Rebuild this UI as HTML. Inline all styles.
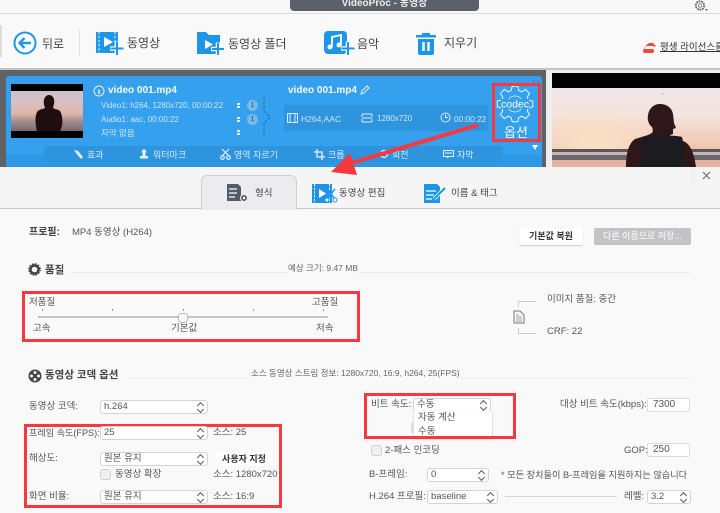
<!DOCTYPE html>
<html><head><meta charset="utf-8">
<style>
*{box-sizing:border-box}
html,body{margin:0;padding:0}
body{width:720px;height:513px;overflow:hidden;position:relative;background:#f9f9fa;font-family:"Liberation Sans","Noto Sans CJK KR",sans-serif;color:#555}
#w{position:absolute;left:0;top:0;width:720px;height:513px;overflow:hidden;filter:blur(.3px)}
.a{position:absolute;white-space:nowrap}
.t{position:absolute;white-space:nowrap;line-height:14px}
.sel{position:absolute;height:13px;background:#fff;border:1px solid #d4d4d6;border-radius:3px;font-size:9.5px;line-height:11px;padding-left:3px;color:#555;white-space:nowrap}
.sel:before,.sel:after{content:"";position:absolute;right:4px;width:4px;height:4px;transform:rotate(45deg)}
.sel:before{top:1.5px;border-top:1px solid #555;border-left:1px solid #555}
.sel:after{top:6px;border-bottom:1px solid #555;border-right:1px solid #555}
.inp{position:absolute;height:14px;background:#fff;border:1px solid #dcdcde;border-radius:2px;font-size:10px;line-height:12px;padding-left:5px;color:#555}
.red{position:absolute;border:3px solid #f7393f}
.ck{position:absolute;width:11px;height:11px;background:#f0f0f0;border:1px solid #d0d0d2;border-radius:3px}
</style></head><body><div id="w">

<!-- top bar -->
<div class="a" style="left:0;top:0;width:720px;height:14px;background:#f8f8f8;border-bottom:1px solid #dcdcdc"></div>
<div class="a" style="left:290px;top:0;width:189px;height:11px;background:#5c6169;border-radius:0 0 4px 4px;color:#eee;font-size:10px;font-weight:bold;line-height:8px;text-align:center">VideoProc - 동영상</div>
<svg class="a" style="left:694px;top:0" width="15" height="13" viewBox="0 0 15 13"><circle cx="6" cy="5.500" r="4.200" fill="none" stroke="#666" stroke-width="1.800" stroke-dasharray="1.800 .8"/><circle cx="6" cy="5.500" r="1.800" fill="none" stroke="#777" stroke-width=".8"/><path d="M11 9h3l-1.500 2z" fill="#666"/></svg>

<!-- toolbar -->
<div class="a" style="left:0;top:14px;width:720px;height:54px;background:#f9f9f9"></div>
<div class="a" style="left:0;top:25px;width:2px;height:32px;background:#ddd"></div>
<svg class="a" style="left:12px;top:30px" width="26" height="26" viewBox="0 0 26 26"><circle cx="13" cy="13" r="10.500" fill="#fff" stroke="#1e96e8" stroke-width="2"/><path d="M19 13H8M12.500 8l-5 5 5 5" fill="none" stroke="#1e96e8" stroke-width="2.400"/></svg>
<div class="t" style="left:42px;top:37px;font-size:12px;color:#444">뒤로</div>
<div class="a" style="left:79px;top:29px;width:1px;height:27px;background:#e2e2e2"></div>

<svg class="a" style="left:96px;top:31px" width="29" height="25" viewBox="0 0 29 25"><rect x="0" y="1" width="22" height="21" fill="#1e96e8"/><path d="M3 1v21M19 1v21" stroke="#fff" stroke-width=".9" stroke-dasharray="2.400 1.600"/><path d="M8 6l9 5-9 5z" fill="#fff"/><path d="M21 10.500v14M14 17.500h14" stroke="#f9f9f9" stroke-width="4.500"/><path d="M21 11v13M14.500 17.500h13" stroke="#1e96e8" stroke-width="2"/></svg>
<div class="t" style="left:127px;top:36px;font-size:12px;color:#444">동영상</div>

<svg class="a" style="left:197px;top:31px" width="29" height="25" viewBox="0 0 29 25"><path d="M0 2a1 1 0 0 1 1-1h8l3 3h11v19H0z" fill="#1e96e8"/><path d="M8 9l8 4.500-8 4.500z" fill="#fff"/><path d="M21 11.500v13M14 18h14" stroke="#f9f9f9" stroke-width="4.500"/><path d="M21 12v12M15 18h12" stroke="#1e96e8" stroke-width="2"/></svg>
<div class="t" style="left:228px;top:37px;font-size:12px;color:#444">동영상 폴더</div>

<svg class="a" style="left:324px;top:31px" width="32" height="25" viewBox="0 0 32 25"><rect x="0" y="0" width="23" height="23" rx="4" fill="#1e96e8"/><path d="M8 16V6l9-2v10" fill="none" stroke="#fff" stroke-width="1.800"/><circle cx="6" cy="16" r="2.500" fill="#fff"/><circle cx="15" cy="14" r="2.500" fill="#fff"/><path d="M24 10.500v14M17 17.500h14" stroke="#f9f9f9" stroke-width="4.500"/><path d="M24 11v13M17.500 17.500h13" stroke="#1e96e8" stroke-width="2"/></svg>
<div class="t" style="left:357px;top:37px;font-size:12px;color:#444">음악</div>

<svg class="a" style="left:415px;top:32px" width="22" height="24" viewBox="0 0 22 24"><path d="M1 3h20v2.500H1z" fill="#1e96e8"/><path d="M7 3V1h8v2" fill="#1e96e8"/><path d="M3 7h16v14a2 2 0 0 1-2 2H5a2 2 0 0 1-2-2z" fill="#1e96e8"/><path d="M8.500 10v9M13.500 10v9" stroke="#fff" stroke-width="2.400"/></svg>
<div class="t" style="left:444px;top:36px;font-size:12px;color:#444">지우기</div>

<svg class="a" style="left:643px;top:42px" width="14" height="12" viewBox="0 0 14 12"><path d="M1 8C2 3 6 0 10 1l3 3-2 1c0-1-1-1-2-1H3z" fill="#ef4a3b"/><rect x="0" y="7" width="11" height="4" rx="2" fill="#ef4a3b"/></svg>
<div class="t" style="left:660px;top:41px;font-size:9.500px;color:#333;text-decoration:underline;width:60px;overflow:hidden">평생 라이선스를</div>

<!-- band -->
<div class="a" style="left:0;top:68px;width:720px;height:99px;background:#eeeeee;border-top:2px solid #c4c4c4"></div>
<div class="a" style="left:0;top:70px;width:546px;height:97px;background:#5f6367"></div>

<!-- right preview -->
<svg class="a" style="left:552px;top:73px" width="168" height="94" viewBox="0 0 168 94">
<defs><linearGradient id="sky" x1="0" y1="0" x2="0" y2="1"><stop offset="0" stop-color="#efe9ee"/><stop offset=".45" stop-color="#f3e3de"/><stop offset=".75" stop-color="#f3c9b3"/><stop offset="1" stop-color="#d99f86"/></linearGradient>
<radialGradient id="sun" cx=".25" cy=".8" r=".5"><stop offset="0" stop-color="#fbe3c6"/><stop offset="1" stop-color="#fbe3c6" stop-opacity="0"/></radialGradient></defs>
<rect width="168" height="94" fill="url(#sky)"/><rect width="168" height="94" fill="url(#sun)"/><rect width="168" height="15" fill="#000"/>
<rect y="76" width="168" height="3" fill="#5a5660"/><rect y="79" width="168" height="3" fill="#cbb4ae"/><rect y="82" width="168" height="5" fill="#6b666d"/><rect y="87" width="168" height="7" fill="#e3b5a0"/>
<path d="M74 94c0-14 3-24 9-28l13-4 4-2c1-1 1-4 0-6-3-2-5-7-4-12 1-7 6-11 12-11 7 0 12 4 13 10l1 9 2 5-3 1v5l-3 1 1 3 12 3c6 2 11 10 13 26z" fill="#2d171a"/>
<path d="M88 94c0-12 1-24 4-30 10-2 32-2 38 0 2 8 3 20 2 30z" fill="#1c1b20"/>
<path d="M108 20l5 1-1 1z" fill="#bbb"/>
</svg>

<!-- blue panel -->
<div class="a" style="left:6px;top:76px;width:536px;height:91px;background:#34a0ee;border-radius:3px 3px 0 0"></div>
<div class="a" style="left:6px;top:155px;width:536px;height:12px;background:#2c98e6"></div>
<div class="a" style="left:44px;top:146px;width:459px;height:17px;background:#2e94de;border-radius:3px"></div>
<svg class="a" style="left:11px;top:84px" width="72" height="54" viewBox="0 0 72 54">
<defs><linearGradient id="sky2" x1="0" y1="0" x2="0" y2="1"><stop offset="0" stop-color="#cdbfcb"/><stop offset=".3" stop-color="#d6c2c6"/><stop offset=".55" stop-color="#e0b4a4"/><stop offset=".7" stop-color="#9b8a8d"/><stop offset="1" stop-color="#5f565d"/></linearGradient></defs>
<rect width="72" height="54" fill="url(#sky2)"/><rect width="72" height="7" fill="#000"/><rect y="47" width="72" height="7" fill="#000"/>
<path d="M26 47c-2-7-2-15 0-19 2-3 7-3 8-4 0-1-1-2-1-4-1-4 1-9 5-9 4 0 6 4 5 9l-1 4c3 2 7 1 8 5 2 6 2 13-1 18z" fill="#1f0f10"/></svg>

<svg class="a" style="left:92px;top:84px" width="14" height="14" viewBox="0 0 14 14"><circle cx="7" cy="7" r="5" fill="#3a9fe8" stroke="#e6f2fb" stroke-width="1"/><path d="M7 5.500v4.500" stroke="#e6f2fb" stroke-width="1.500"/><path d="M8 3.500l1 1" stroke="#e44" stroke-width="1"/></svg>
<div class="t" style="left:108px;top:84px;font-size:10px;font-weight:bold;color:#f4faff">video 001.mp4</div>
<div class="t" style="left:101px;top:99px;font-size:8px;color:#cfe6f8">Video1: h264, 1280x720, 00:00:22</div>
<div class="t" style="left:101px;top:113px;font-size:8px;color:#cfe6f8">Audio1: aac, 00:00:22</div>
<div class="t" style="left:101px;top:126px;font-size:8.500px;color:#cfe6f8">자막 없음</div>
<div class="a" style="left:237px;top:103px;width:3px;height:2px;background:#e6f2fb;box-shadow:0 3px 0 #e6f2fb"></div>
<div class="a" style="left:237px;top:117px;width:3px;height:2px;background:#e6f2fb;box-shadow:0 3px 0 #e6f2fb"></div>
<div class="a" style="left:237px;top:130px;width:3px;height:2px;background:#e6f2fb;box-shadow:0 3px 0 #e6f2fb"></div>
<div class="a" style="left:247px;top:100px;width:11px;height:11px;border-radius:50%;background:#79b9e8;color:#1c5a88;font-size:7px;line-height:11px;text-align:center">1</div>
<div class="a" style="left:247px;top:114px;width:11px;height:11px;border-radius:50%;background:#79b9e8;color:#1c5a88;font-size:7px;line-height:11px;text-align:center">1</div>
<svg class="a" style="left:258px;top:96px" width="18" height="40" viewBox="0 0 18 40"><path d="M6 1v14l6 6-6 6v12" fill="none" stroke="#1f6ea8" stroke-width="1" stroke-dasharray="3 1.500"/></svg>

<div class="t" style="left:288px;top:84px;font-size:10px;font-weight:bold;color:#f4faff">video 001.mp4</div>
<svg class="a" style="left:360px;top:85px" width="10" height="10" viewBox="0 0 10 10"><path d="M1 9l1-3 5-5 2 2-5 5z" fill="none" stroke="#e6f2fb" stroke-width="1"/></svg>
<div class="a" style="left:284px;top:105px;width:204px;height:26px;background:#2e94de;border-radius:2px"></div>
<svg class="a" style="left:287px;top:113px" width="11" height="10" viewBox="0 0 11 10"><rect x=".5" y=".5" width="10" height="9" fill="none" stroke="#d8ebfa"/><path d="M3 .5v9M8 .5v9" stroke="#d8ebfa"/></svg>
<div class="t" style="left:301px;top:112px;font-size:8.500px;color:#cfe6f8">H264,AAC</div>
<svg class="a" style="left:361px;top:113px" width="12" height="10" viewBox="0 0 12 10"><path d="M1 1h10M1 9h10M1 1v3M11 1v3M1 6v3M11 6v3M1 5h10" fill="none" stroke="#d8ebfa"/></svg>
<div class="t" style="left:377px;top:112px;font-size:8px;color:#cfe6f8">1280x720</div>
<svg class="a" style="left:440px;top:112px" width="11" height="11" viewBox="0 0 11 11"><circle cx="5.500" cy="5.500" r="4.500" fill="none" stroke="#d8ebfa"/><path d="M5.500 2.500v3h2.500" fill="none" stroke="#d8ebfa"/></svg>
<div class="t" style="left:454px;top:112px;font-size:8.300px;color:#cfe6f8">00:00:22</div>

<!-- codec -->
<svg class="a" style="left:494px;top:83px" width="42" height="42" viewBox="0 0 42 42"><g transform="translate(21,21)"><polygon points="13.46,-3.86 17.78,-2.82 17.78,2.82 13.46,3.86 12.24,6.79 14.56,10.58 10.58,14.56 6.79,12.24 3.86,13.46 2.82,17.78 -2.82,17.78 -3.86,13.46 -6.79,12.24 -10.58,14.56 -14.56,10.58 -12.24,6.79 -13.46,3.86 -17.78,2.82 -17.78,-2.82 -13.46,-3.86 -12.24,-6.79 -14.56,-10.58 -10.58,-14.56 -6.79,-12.24 -3.86,-13.46 -2.82,-17.78 2.82,-17.78 3.86,-13.46 6.79,-12.24 10.58,-14.56 14.56,-10.58 12.24,-6.79" fill="none" stroke="#eaf5fd" stroke-width="1"/><circle r="8" fill="none" stroke="#eaf5fd" stroke-width=".7"/><rect x="-14" y="-5" width="28" height="10" fill="#34a0ee"/><text x="0" y="3.500" font-size="10.500" fill="#fff" text-anchor="middle" font-family="Liberation Sans">codec</text></g></svg>
<div class="t" style="left:504px;top:126px;font-size:13px;color:#f2f9fe">옵션</div>
<div class="red" style="left:492px;top:83px;width:49px;height:59px"></div>
<div class="a" style="left:532px;top:145px;width:0;height:0;border-left:3.500px solid transparent;border-right:3.500px solid transparent;border-top:5px solid #fff"></div>
<div class="t" style="left:531px;top:74px;font-size:6px;color:#1a5f94">⌄⌄</div>

<!-- strip labels -->
<svg class="a" style="left:73px;top:149px" width="11" height="11" viewBox="0 0 11 11"><path d="M1 1l4 1 5 6-2 2-5-6z" fill="#e6f2fb"/></svg>
<div class="t" style="left:87px;top:148px;font-size:9px;color:#d8ebfa">효과</div>
<svg class="a" style="left:139px;top:149px" width="10" height="10" viewBox="0 0 10 10"><circle cx="5" cy="2.500" r="2.200" fill="#e6f2fb"/><rect x="3.500" y="4" width="3" height="3" fill="#e6f2fb"/><rect x="1" y="7" width="8" height="2.500" fill="#e6f2fb"/></svg>
<div class="t" style="left:153px;top:148px;font-size:9px;color:#d8ebfa">워터마크</div>
<svg class="a" style="left:220px;top:148px" width="11" height="12" viewBox="0 0 11 12"><path d="M2 1l7 7M9 1L2 8" stroke="#e6f2fb" stroke-width="1.200"/><circle cx="2.500" cy="9.500" r="1.800" fill="none" stroke="#e6f2fb" stroke-width="1.200"/><circle cx="8.500" cy="9.500" r="1.800" fill="none" stroke="#e6f2fb" stroke-width="1.200"/></svg>
<div class="t" style="left:234px;top:148px;font-size:9px;color:#d8ebfa">영역 자르기</div>
<svg class="a" style="left:314px;top:149px" width="11" height="11" viewBox="0 0 11 11"><path d="M3 0v8h8M0 3h8v8" fill="none" stroke="#e6f2fb" stroke-width="1.300"/></svg>
<div class="t" style="left:328px;top:148px;font-size:9px;color:#d8ebfa">크롭</div>
<svg class="a" style="left:379px;top:149px" width="10" height="10" viewBox="0 0 10 10"><circle cx="5" cy="5" r="3.500" fill="none" stroke="#e6f2fb" stroke-width="1.200"/></svg>
<div class="t" style="left:392px;top:148px;font-size:9px;color:#d8ebfa">회전</div>
<svg class="a" style="left:443px;top:150px" width="11" height="9" viewBox="0 0 11 9"><rect x=".5" y=".5" width="10" height="6" fill="none" stroke="#e6f2fb"/><path d="M2 3h7M4 8l1.500-1.500" stroke="#e6f2fb"/></svg>
<div class="t" style="left:457px;top:148px;font-size:9px;color:#d8ebfa">자막</div>

<!-- dialog -->
<div class="a" style="left:0;top:167px;width:720px;height:346px;background:#f9f9fa"></div>
<div class="a" style="left:0;top:167px;width:720px;height:42px;background:#f5f5f6;border-bottom:1px solid #c9c9cb"></div>
<div class="a" style="left:201px;top:175px;width:96px;height:35px;background:#ececee;border:1px solid #d2d2d4;border-bottom:none;border-radius:6px 6px 0 0"></div>
<svg class="a" style="left:226px;top:183px" width="24" height="22" viewBox="0 0 24 22"><path d="M1 1h11l3 3v14H1z" fill="#565b66"/><path d="M3 6h8M3 10h8M3 14h6" stroke="#fff" stroke-width="1.300"/><circle cx="18" cy="15" r="3.500" fill="#565b66" stroke="#f0f0f0" stroke-width="1"/><circle cx="18" cy="15" r="1.300" fill="#f0f0f0"/></svg>
<div class="t" style="left:255px;top:187px;font-size:9.500px;color:#444">형식</div>
<svg class="a" style="left:312px;top:184px" width="26" height="20" viewBox="0 0 26 20"><rect x="0" y="0" width="20" height="19" fill="#1e96e8"/><path d="M2.500 0v19M17.500 0v19" stroke="#fff" stroke-dasharray="2.200 1.500"/><path d="M7 5l7 4.500-7 4.500z" fill="#fff"/><path d="M15 5l8 10M23 5l-8 10" stroke="#1e96e8" stroke-width="1.500"/><circle cx="15" cy="16" r="2" fill="#fff" stroke="#1e96e8"/><circle cx="23" cy="16" r="2" fill="#fff" stroke="#1e96e8"/></svg>
<div class="t" style="left:339px;top:187px;font-size:9.500px;color:#444">동영상 편집</div>
<svg class="a" style="left:423px;top:184px" width="24" height="20" viewBox="0 0 24 20"><path d="M1 0h13l3 3v16H1z" fill="#1e96e8"/><path d="M3 7h10M3 11h8M3 15h6" stroke="#fff" stroke-width="1.300"/><path d="M11 15L21 5" stroke="#fff" stroke-width="3.500"/><path d="M11 15L22 4" stroke="#1e96e8" stroke-width="2"/></svg>
<div class="t" style="left:451px;top:187px;font-size:9.500px;color:#444">이름 &amp; 태그</div>
<div class="a" style="left:692px;top:167px;width:1px;height:20px;background:#ececec"></div>
<svg class="a" style="left:701px;top:170px" width="11" height="11" viewBox="0 0 11 11"><path d="M2 2l7 7M9 2L2 9" stroke="#666" stroke-width="1"/></svg>

<!-- arrow -->
<svg class="a" style="left:320px;top:115px" width="170" height="70" viewBox="320 115 170 70"><path d="M478 125L348 164" stroke="#f7393f" stroke-width="4"/><path d="M331 172L350 153L357 175z" fill="#f7393f"/></svg>

<!-- profile -->
<div class="t" style="left:29px;top:226px;font-size:10px;font-weight:bold;color:#444">프로필:</div>
<div class="t" style="left:72px;top:226px;font-size:9.500px;color:#555">MP4 동영상 (H264)</div>
<div class="a" style="left:519px;top:228px;width:64px;height:17px;background:#fff;border-radius:2px;box-shadow:0 1px 1px #ccc;font-size:9px;font-weight:bold;line-height:17px;text-align:center;color:#333">기본값 복원</div>
<div class="a" style="left:594px;top:228px;width:97px;height:17px;background:#c3c3c5;border-radius:2px;font-size:9px;font-weight:bold;line-height:17px;text-align:center;color:#ececec">다른 이름으로 저장...</div>

<!-- quality -->
<svg class="a" style="left:28px;top:263px" width="13" height="13" viewBox="0 0 13 13"><circle cx="6.500" cy="6.500" r="4" fill="none" stroke="#444" stroke-width="2.400"/><circle cx="6.500" cy="6.500" r="5.500" fill="none" stroke="#444" stroke-width="1.600" stroke-dasharray="1.800 1.100"/></svg>
<div class="t" style="left:45px;top:263px;font-size:10.500px;font-weight:bold;color:#444">품질</div>
<div class="a" style="left:70px;top:272px;width:621px;height:1px;background:#ececec"></div>
<div class="t" style="left:288px;top:261px;font-size:8.500px;color:#666;background:#f9f9fa">예상 크기: 9.47 MB</div>
<div class="red" style="left:22px;top:291px;width:338px;height:51px"></div>
<div class="t" style="left:29px;top:296px;font-size:9.500px;color:#555">저품질</div>
<div class="t" style="left:312px;top:296px;font-size:9.500px;color:#555">고품질</div>
<div class="a" style="left:42px;top:309px;width:1px;height:2px;background:#999;box-shadow:70px 0 #999,141px 0 #999,211px 0 #999,281px 0 #999"></div>
<div class="a" style="left:38px;top:316px;width:290px;height:2px;background:#c4c4c4"></div>
<div class="a" style="left:178px;top:313px;width:10px;height:10px;background:#f8f8f8;border:1px solid #bbb;border-radius:3px 3px 4px 4px"></div>
<div class="t" style="left:33px;top:322px;font-size:9.500px;color:#555">고속</div>
<div class="t" style="left:171px;top:322px;font-size:9.500px;color:#555">기본값</div>
<div class="t" style="left:316px;top:322px;font-size:9.500px;color:#555">저속</div>

<div class="a" style="left:518px;top:301px;width:18px;height:1px;background:#ccc"></div><div class="a" style="left:518px;top:301px;width:1px;height:6px;background:#ccc"></div>
<div class="a" style="left:518px;top:333px;width:18px;height:1px;background:#ccc"></div><div class="a" style="left:518px;top:328px;width:1px;height:6px;background:#ccc"></div>
<svg class="a" style="left:513px;top:310px" width="12" height="14" viewBox="0 0 12 14"><path d="M1 1h6l4 4v8H1z" fill="none" stroke="#777"/><path d="M3 7h6M3 9h6M3 11h6M3 5h3" stroke="#888" stroke-width=".8"/></svg>
<div class="t" style="left:547px;top:293px;font-size:9.500px;color:#555">이미지 품질: 중간</div>
<div class="t" style="left:547px;top:325px;font-size:9.500px;color:#555">CRF: 22</div>

<!-- codec options -->
<svg class="a" style="left:28px;top:369px" width="14" height="14" viewBox="0 0 14 14"><circle cx="7" cy="7" r="6.500" fill="#444"/><circle cx="7" cy="3.500" r="1.500" fill="#f9f9fa"/><circle cx="7" cy="10.500" r="1.500" fill="#f9f9fa"/><circle cx="3.500" cy="7" r="1.500" fill="#f9f9fa"/><circle cx="10.500" cy="7" r="1.500" fill="#f9f9fa"/></svg>
<div class="t" style="left:45px;top:368px;font-size:10.500px;font-weight:bold;color:#444">동영상 코덱 옵션</div>
<div class="a" style="left:128px;top:378px;width:563px;height:1px;background:#ececec"></div>
<div class="t" style="left:251px;top:366px;font-size:8.500px;color:#666;background:#f9f9fa">소스 동영상 스트림 정보: 1280x720, 16:9, h264, 25(FPS)</div>

<div class="t" style="left:29px;top:400px;font-size:9.500px;color:#555">동영상 코덱:</div>
<div class="sel" style="left:100px;top:400px;width:108px;height:14px;line-height:12px">h.264</div>

<div class="red" style="left:24px;top:424px;width:258px;height:84px"></div>
<div class="t" style="left:29px;top:426px;font-size:9.100px;color:#555">프레임 속도(FPS):</div>
<div class="sel" style="left:100px;top:426px;width:108px;height:14px;line-height:12px">25</div>
<div class="t" style="left:213px;top:426px;font-size:9.500px;color:#555">소스: 25</div>
<div class="t" style="left:29px;top:452px;font-size:9.500px;color:#555">해상도:</div>
<div class="sel" style="left:100px;top:452px;width:108px;height:14px;line-height:12px">원본 유지</div>
<div class="a" style="left:216px;top:452px;width:56px;height:14px;background:#fff;border-radius:2px;font-size:9px;font-weight:bold;line-height:14px;text-align:center;color:#333">사용자 지정</div>
<div class="ck" style="left:100px;top:469px"></div>
<div class="t" style="left:115px;top:468px;font-size:9.500px;color:#555">동영상 확장</div>
<div class="t" style="left:213px;top:468px;font-size:9.500px;color:#555">소스: 1280x720</div>
<div class="t" style="left:29px;top:490px;font-size:9.500px;color:#555">화면 비율:</div>
<div class="sel" style="left:100px;top:490px;width:108px;height:14px;line-height:12px">원본 유지</div>
<div class="t" style="left:213px;top:490px;font-size:9.500px;color:#555">소스: 16:9</div>

<div class="t" style="left:371px;top:398px;font-size:9.500px;color:#555">비트 속도:</div>
<div class="sel" style="left:413px;top:398px;width:78px;height:14px;line-height:12px">수동</div>
<div class="a" style="left:414px;top:411px;width:78px;height:27px;background:#fff;box-shadow:0 1px 2px #bbb;font-size:9.500px;color:#555;line-height:13.500px;padding-left:4px">자동 계산<br>수동</div>
<div class="a" style="left:411px;top:423px;width:3px;height:10px;background:#ddd"></div>
<div class="red" style="left:364px;top:393px;width:152px;height:46px"></div>
<div class="t" style="left:560px;top:398px;font-size:9.500px;color:#555">대상 비트 속도(kbps):</div>
<div class="inp" style="left:647px;top:398px;width:43px">7300</div>
<div class="ck" style="left:371px;top:445px"></div>
<div class="t" style="left:385px;top:444px;font-size:9.500px;color:#555">2-패스 인코딩</div>
<div class="t" style="left:624px;top:444px;font-size:9.500px;color:#555">GOP:</div>
<div class="inp" style="left:647px;top:443px;width:43px">250</div>
<div class="t" style="left:369px;top:468px;font-size:9.500px;color:#555">B-프레임:</div>
<div class="sel" style="left:427px;top:468px;width:62px;height:14px;line-height:12px">0</div>
<div class="t" style="left:501px;top:468px;font-size:9.200px;color:#555">* 모든 장치들이 B-프레임을 지원하지는 않습니다</div>
<div class="t" style="left:369px;top:490px;font-size:9.500px;color:#555">H.264 프로필:</div>
<div class="sel" style="left:427px;top:490px;width:71px;height:14px;line-height:12px">baseline</div>
<div class="a" style="left:505px;top:496px;width:112px;height:1px;background:#d4d4d6"></div>
<div class="t" style="left:624px;top:490px;font-size:9.500px;color:#555">레벨:</div>
<div class="sel" style="left:647px;top:490px;width:44px;height:14px;line-height:12px">3.2</div>

</div></body></html>
